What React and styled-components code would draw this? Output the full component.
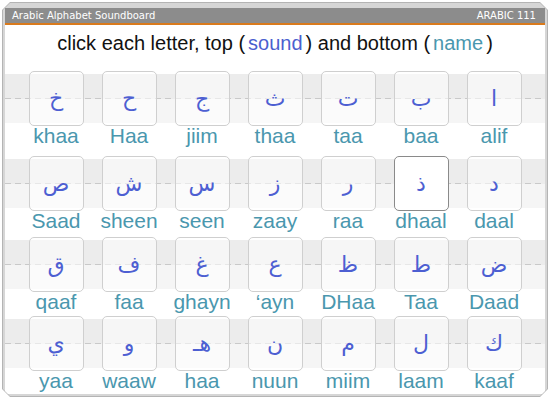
import React, { useState } from "react";
import styled, { createGlobalStyle } from "styled-components";

const GlobalStyle = createGlobalStyle`
  html, body {
    margin: 0;
    padding: 0;
    background: #fff;
  }
`;

const Frame = styled.div`
  margin: 2px 0 0 2px;
  width: 546px;
  height: 395px;
  background: #b4b4b4;
  clip-path: polygon(8px 0, calc(100% - 8px) 0, 100% 8px, 100% calc(100% - 8px), calc(100% - 8px) 100%, 8px 100%, 0 calc(100% - 8px), 0 8px);
  padding: 1px;
  box-sizing: border-box;
`;

const FrameInner = styled.div`
  width: 100%;
  height: 100%;
  background: #d6d6d6;
  clip-path: polygon(7px 0, calc(100% - 7px) 0, 100% 7px, 100% calc(100% - 7px), calc(100% - 7px) 100%, 7px 100%, 0 calc(100% - 7px), 0 7px);
  padding: 5px 2px 2px 2px;
  box-sizing: border-box;
  display: flex;
  flex-direction: column;
`;

const TitleBar = styled.div`
  height: 15px;
  background: #8c8c8c;
  border-bottom: 2px solid #d97a1c;
  display: flex;
  align-items: center;
  justify-content: space-between;
  padding: 0 9px 0 7px;
  font-family: "DejaVu Sans", Verdana, sans-serif;
  font-size: 10px;
  color: #fff;
`;

const Content = styled.div`
  flex: 1;
  background: #fff;
  display: flex;
  flex-direction: column;
`;

const Heading = styled.div`
  text-align: center;
  font-family: "Liberation Sans", Arial, sans-serif;
  font-size: 20px;
  color: #111;
  margin-top: 7px;
  margin-bottom: 16px;
`;

const Word = styled.span`
  color: ${(p) => p.color};
  margin: 0 3px;
`;

const Row = styled.div`
  display: flex;
  flex-direction: column;
  margin-top: ${(p) => p.gap}px;
`;

const Strip = styled.div`
  height: 55px;
  display: flex;
  flex-direction: row-reverse;
  justify-content: center;
  gap: 18px;
  background:
    repeating-linear-gradient(to right, #c9c9c9 0 6px, transparent 6px 10px) 0 27px / 100% 1px no-repeat,
    linear-gradient(to bottom, transparent 3px, #ececec 3px, #ececec 28px, #f5f5f5 28px, #f5f5f5 52px, transparent 52px);
`;

const Labels = styled.div`
  display: flex;
  flex-direction: row-reverse;
  justify-content: center;
  gap: 18px;
  height: 23px;
`;

const Tile = styled.button`
  width: 55px;
  height: 55px;
  box-sizing: border-box;
  border-radius: 5px;
  border: 1px solid ${(p) => (p.active ? "#8a8a8a" : "#cfcfcf")};
  background: ${(p) => (p.active ? "#fff" : "rgba(255,255,255,0.55)")};
  padding: 0;
  display: flex;
  align-items: center;
  justify-content: center;
  font-family: "DejaVu Sans", sans-serif;
  font-size: 22px;
  color: #4d5fd2;
  cursor: pointer;
`;

const Name = styled.div`
  width: 55px;
  font-family: "Liberation Sans", Arial, sans-serif;
  font-size: 21px;
  line-height: 20px;
  color: #4a97ae;
  white-space: nowrap;
  display: flex;
  justify-content: center;
`;

const rows = [
  { gap: 0, items: [["ا", "alif"], ["ب", "baa"], ["ت", "taa"], ["ث", "thaa"], ["ج", "jiim"], ["ح", "Haa"], ["خ", "khaa"]] },
  { gap: 7, items: [["د", "daal"], ["ذ", "dhaal"], ["ر", "raa"], ["ز", "zaay"], ["س", "seen"], ["ش", "sheen"], ["ص", "Saad"]] },
  { gap: 3, items: [["ض", "Daad"], ["ط", "Taa"], ["ظ", "DHaa"], ["ع", "\u2018ayn"], ["غ", "ghayn"], ["ف", "faa"], ["ق", "qaaf"]] },
  { gap: 1, items: [["ك", "kaaf"], ["ل", "laam"], ["م", "miim"], ["ن", "nuun"], ["هـ", "haa"], ["و", "waaw"], ["ي", "yaa"]] },
];

export default function App() {
  const [active, setActive] = useState("dhaal");
  return (
    <>
      <GlobalStyle />
      <Frame>
        <FrameInner>
          <TitleBar>
            <span>Arabic Alphabet Soundboard</span>
            <span>ARABIC 111</span>
          </TitleBar>
          <Content>
            <Heading>
              click each letter, top (<Word color="#4b5fcf">sound</Word>) and bottom (<Word color="#4a97ae">name</Word>)
            </Heading>
            {rows.map((row, i) => (
              <Row key={i} gap={row.gap}>
                <Strip>
                  {row.items.map(([ch, name]) => (
                    <Tile key={name} active={active === name} onClick={() => setActive(name)}>
                      {ch}
                    </Tile>
                  ))}
                </Strip>
                <Labels>
                  {row.items.map(([, name]) => (
                    <Name key={name}>{name}</Name>
                  ))}
                </Labels>
              </Row>
            ))}
          </Content>
        </FrameInner>
      </Frame>
    </>
  );
}
